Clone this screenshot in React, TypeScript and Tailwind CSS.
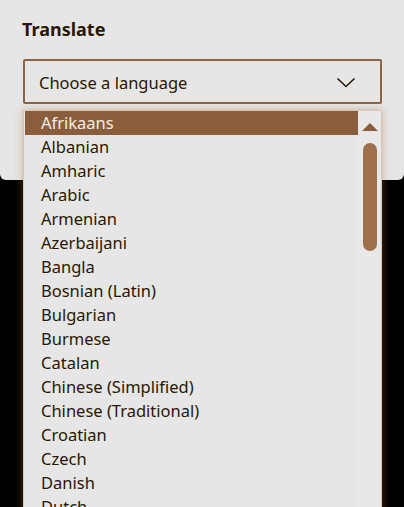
import React from "react";

const langs = [
  "Afrikaans",
  "Albanian",
  "Amharic",
  "Arabic",
  "Armenian",
  "Azerbaijani",
  "Bangla",
  "Bosnian (Latin)",
  "Bulgarian",
  "Burmese",
  "Catalan",
  "Chinese (Simplified)",
  "Chinese (Traditional)",
  "Croatian",
  "Czech",
  "Danish",
  "Dutch",
];

export default function App() {
  return (
    <div
      className="relative w-[404px] h-[507px] bg-black overflow-hidden"
      style={{ fontFamily: '"Noto Sans", "Open Sans", sans-serif' }}
    >
      <div className="w-[404px] h-[180px] bg-[#e6e6e6] rounded-b-[6px] pt-[15px] px-[23px]">
        <div className="text-[18px] font-bold text-[#2a1704] leading-[28px] -ml-[1px]">Translate</div>
        <div className="mt-[16px] h-[45px] w-[359px] border-2 border-[#8d6446] rounded-[2px] flex items-center justify-between pl-[14px] pr-[24px] bg-[#e6e6e6]">
          <span className="text-[16.5px] text-[#2a1704] pt-[3px]">Choose a language</span>
          <svg className="mt-[2px]" width="20" height="11" viewBox="0 0 20 11" fill="none">
            <path d="M1.5 1.5 L10 9.5 L18.5 1.5" stroke="#2a1704" strokeWidth="1.6" />
          </svg>
        </div>
      </div>
      <div className="absolute left-[23px] top-[110px] w-[359px] h-[420px] bg-[#e6e6e6] border border-[#d8c4b4] shadow-[0_0_8px_rgba(180,110,60,0.45)] flex">
        <div className="flex-1 flex flex-col">
          {langs.map((l, i) => (
            <div
              key={l}
              className={
                i === 0
                  ? "h-[24px] shrink-0 bg-[#8a5e3d] text-[#f6ece2] pl-[16px] text-[16.5px] leading-[24px] ml-[1px]"
                  : "h-[24px] shrink-0 text-[#2a1704] pl-[17px] text-[16.5px] leading-[24px]"
              }
            >
              {l}
            </div>
          ))}
        </div>
        <div className="w-[23px] flex flex-col items-center bg-[#e8e8e8]">
          <svg className="mt-[12px]" width="16" height="8" viewBox="0 0 16 8">
            <path d="M0 8 L8 0 L16 8 Z" fill="#8a5e3d" />
          </svg>
          <div className="mt-[12px] w-[14px] h-[108px] rounded-full bg-[#a06f4c]" />
        </div>
      </div>
    </div>
  );
}
